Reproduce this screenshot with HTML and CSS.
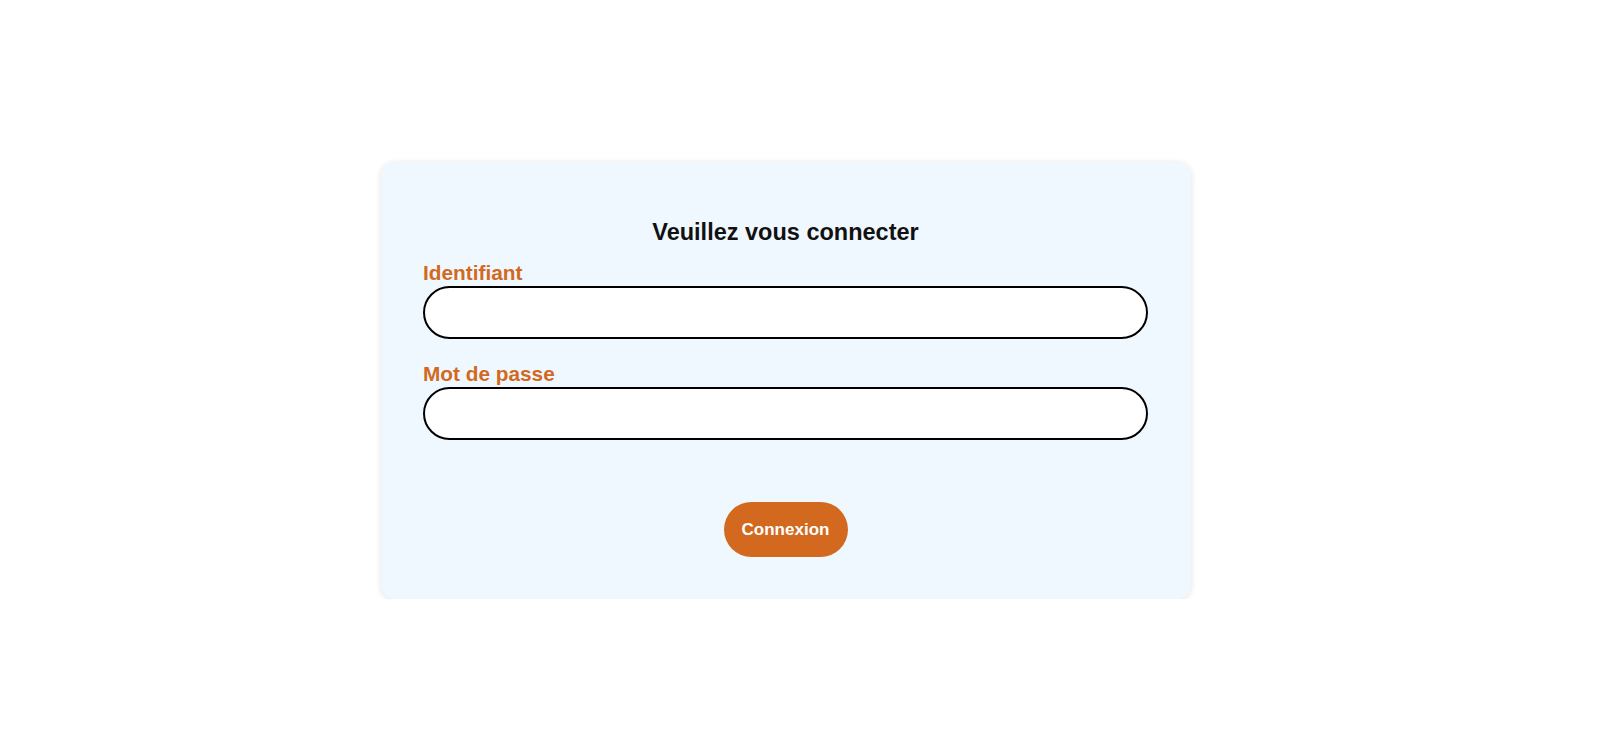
FILE: index.html
```html
<!DOCTYPE html>
<html lang="fr">
<head>
<meta charset="utf-8">
<title>Connexion</title>
<link rel="stylesheet" href="styles.css">
</head>
<body>
<form class="card">
  <h2 class="title">Veuillez vous connecter</h2>
  <label class="label label-first" for="login">Identifiant</label>
  <input class="field" id="login" type="text">
  <label class="label label-next" for="pwd">Mot de passe</label>
  <input class="field" id="pwd" type="password">
  <div class="actions">
    <button class="btn" type="button">Connexion</button>
  </div>
</form>
</body>
</html>
```
FILE: styles.css
```css
html, body {
  margin: 0;
  padding: 0;
  background: #ffffff;
  font-family: "Liberation Sans", Arial, sans-serif;
}
body {
  padding-top: 162px;
  padding-left: 381px;
}
.card {
  box-sizing: border-box;
  width: 810px;
  height: 437px;
  background: #f0f8ff;
  border-radius: 14px;
  box-shadow: 0 1px 6px rgba(0, 0, 0, 0.12);
  padding: 57px 43px 0 42px;
  display: flex;
  flex-direction: column;
}
.title {
  margin: 0;
  font-size: 23.5px;
  line-height: 26px;
  font-weight: bold;
  color: #111;
  text-align: center;
}
.label {
  display: block;
  font-size: 20.8px;
  line-height: 24px;
  font-weight: bold;
  color: #d2691e;
  margin-bottom: 1px;
}
.label-first { margin-top: 16px; }
.label-next { margin-top: 23px; }
.field {
  box-sizing: border-box;
  width: 100%;
  height: 53px;
  border: 2px solid #000;
  border-radius: 27px;
  background: #fff;
  margin: 0;
  padding: 0 20px;
  font-size: 16px;
  outline: none;
}
.actions {
  display: flex;
  justify-content: center;
  margin-top: 62px;
}
.btn {
  width: 124px;
  height: 55px;
  border: none;
  border-radius: 28px;
  background: #d2691e;
  color: #fff;
  font-family: "Liberation Sans", Arial, sans-serif;
  font-size: 17px;
  font-weight: bold;
  padding: 0;
}
```
